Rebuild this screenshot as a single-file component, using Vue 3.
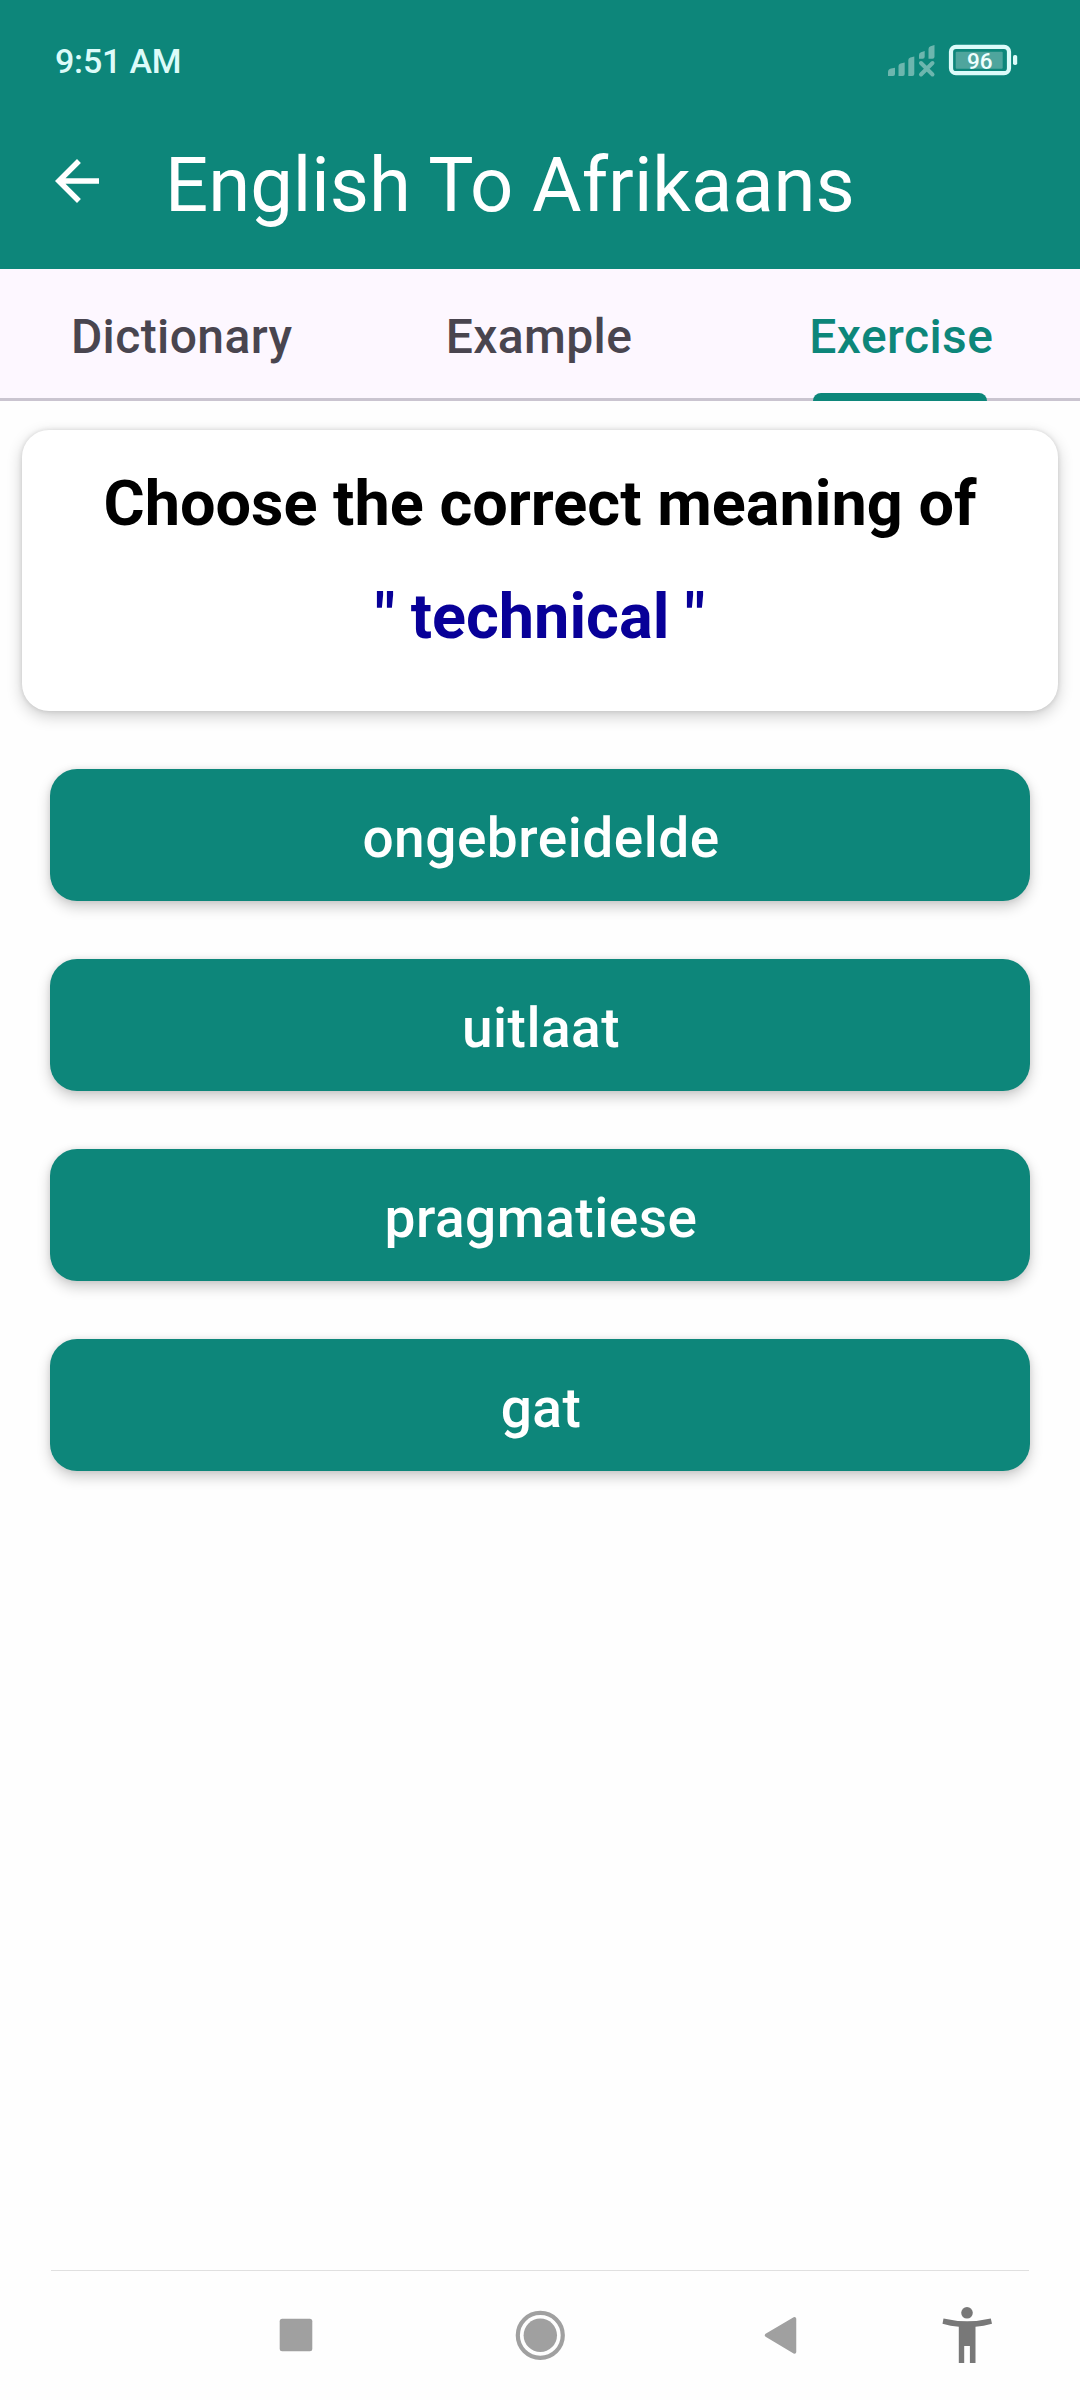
<script setup>
const tabs = ['Dictionary', 'Example', 'Exercise']
const activeTab = 'Exercise'
const answers = ['ongebreidelde', 'uitlaat', 'pragmatiese', 'gat']
</script>

<template>
  <div class="screen">
    <header class="header">
      <div class="status">
        <span class="time">9:51 AM</span>
        <svg class="status-icons" width="132" height="34" viewBox="887 44 132 34">
          <g fill="#6db6ae">
            <path d="M888 76v-4q0-3 3-3.500l4-.7V74q0 2-2 2z" />
            <path d="M898.500 76V66q0-2 2-2.600l4.200-1V74q0 2-2 2z" />
            <path d="M908.300 76V60q0-2 2-2.600l4-1V74q0 2-2 2z" />
            <path d="M919 58.700V55q0-2 2-2.700l3.700-1.200v5.600q0 2-2 2z" />
            <path d="M928.500 58.700V49q0-2 2-2.700l4-1.200v11.600q0 2-2 2z" />
          </g>
          <path d="M921 63l11.500 11.500M932.500 63L921 74.500" stroke="#6db6ae" stroke-width="4" stroke-linecap="round" />
          <rect x="951" y="46.800" width="58" height="26.400" rx="5" fill="none" stroke="#dcfbf9" stroke-width="4.200" />
          <rect x="955.700" y="51.700" width="47" height="17" rx="1" fill="#4fa59d" />
          <rect x="1013" y="55" width="4.200" height="10" rx="1.800" fill="#dcfbf9" />
          <text x="979.800" y="68.700" text-anchor="middle" class="level">96</text>
        </svg>
      </div>
      <div class="toolbar">
        <svg class="back" width="66" height="66" viewBox="0 0 24 24">
          <path d="M20 11H7.830l5.590-5.590L12 4l-8 8 8 8 1.410-1.410L7.830 13H20z" fill="#fff" />
        </svg>
        <h1>English To Afrikaans</h1>
      </div>
    </header>

    <nav class="tabs">
      <div v-for="tab in tabs" :key="tab" class="tab" :class="{ active: tab === activeTab }">
        <span>{{ tab }}</span>
      </div>
    </nav>

    <main>
      <section class="card">
        <p>Choose the correct meaning of</p>
        <p class="word">" technical "</p>
      </section>
      <div class="answers">
        <button v-for="answer in answers" :key="answer">{{ answer }}</button>
      </div>
    </main>

    <footer>
      <svg width="1080" height="130" viewBox="0 2270 1080 130">
        <rect x="51" y="2270" width="978" height="1" fill="#e0e0e0" />
        <g fill="#a0a0a0">
          <rect x="279.700" y="2318.700" width="32.600" height="32.600" rx="2.500" />
          <circle cx="540.300" cy="2335.300" r="16.700" />
          <circle cx="540.300" cy="2335.300" r="22.500" fill="none" stroke="#a0a0a0" stroke-width="4.200" />
          <path d="M766.500 2335.300L794.500 2318.800V2352z" stroke="#a0a0a0" stroke-width="3.500" stroke-linejoin="round" />
        </g>
        <g fill="#787878">
          <circle cx="967" cy="2312.800" r="5.800" />
          <path d="M943.500 2318.500Q967 2324 990.800 2318.500L992 2323.700Q983.500 2326 975.500 2326.800V2363H969.900V2346H964.200V2363H958.800V2326.800Q950.500 2326 942.500 2323.700z" />
        </g>
      </svg>
    </footer>
  </div>
</template>

<style>
body {
  margin: 0;
}
</style>

<style scoped>
.screen {
  display: flex;
  flex-direction: column;
  width: 1080px;
  height: 2400px;
  overflow: hidden;
  background: #fefefe;
  font-family: Roboto, "Liberation Sans", sans-serif;
}
.header {
  height: 269px;
  background: #0d867a;
  color: #fff;
}
.status {
  display: flex;
  justify-content: space-between;
  align-items: center;
  height: 122px;
  padding: 0 61px 0 55px;
}
.time {
  font-size: 34px;
  letter-spacing: -0.2px;
  font-weight: 500;
  color: #dcfbf9;
}
.level {
  font-size: 22.500px;
  font-weight: 500;
  fill: #effffe;
}
.toolbar {
  display: flex;
  align-items: center;
  height: 118px;
  padding-left: 44px;
}
h1 {
  margin: 8px 0 0 55px;
  font-size: 76px;
  line-height: 90px;
  font-weight: 400;
}
.tabs {
  display: flex;
  box-sizing: border-box;
  height: 132px;
  background: #fdf7ff;
  border-bottom: 3px solid #cac4d0;
}
.tab {
  position: relative;
  display: flex;
  flex: 1 1 0;
  box-sizing: border-box;
  align-items: center;
  justify-content: center;
  padding: 6px 0 0 3px;
  font-size: 48px;
  letter-spacing: 0.4px;
  font-weight: 500;
  color: #49454f;
}
.tab:nth-child(2) {
  padding: 6px 2px 0 0;
}
.tab.active {
  color: #0d867a;
}
.tab.active::after {
  content: "";
  position: absolute;
  left: 93px;
  bottom: -3px;
  width: 174px;
  height: 8px;
  border-radius: 8px 8px 0 0;
  background: #0d867a;
}
main {
  flex: 1;
}
.card {
  box-sizing: border-box;
  height: 281px;
  margin: 29px 22px 58px;
  padding-top: 37px;
  border-radius: 27px;
  background: #fff;
  text-align: center;
  box-shadow: 0 5px 16px rgba(0, 0, 0, 0.2), 0 0 5px rgba(0, 0, 0, 0.12);
}
.card p {
  margin: 0 0 39px;
  font-size: 63px;
  line-height: 74px;
  font-weight: 700;
  color: #000;
}
.card .word {
  color: #080098;
}
.answers {
  display: flex;
  flex-direction: column;
  gap: 58px;
  padding: 0 50px;
}
button {
  height: 132px;
  padding: 5px 0 0 2px;
  border: 0;
  border-radius: 27px;
  background: #0d867a;
  color: #fff;
  font: 500 55px Roboto, "Liberation Sans", sans-serif;
  letter-spacing: 0.5px;
  box-shadow: 0 6px 14px rgba(0, 0, 0, 0.2), 0 0 6px rgba(0, 0, 0, 0.08);
}
footer svg {
  display: block;
}
</style>
